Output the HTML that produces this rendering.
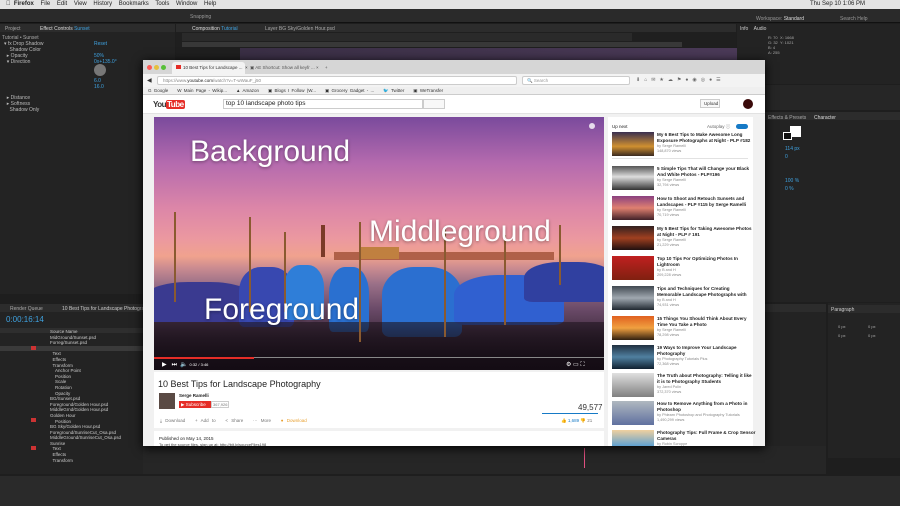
<!DOCTYPE html>
<html><head><meta charset="utf-8"><style>
*{margin:0;padding:0;box-sizing:border-box}
body{width:900px;height:506px;overflow:hidden;background:#1e1e1e;font-family:"Liberation Sans",sans-serif;position:relative;font-size:5px;color:#aaa}
.a{position:absolute}
.t{position:absolute;white-space:nowrap}
.blue{color:#3fa2e0}
.boat{position:absolute;background:#2f55c8;border-radius:40% 40% 10% 10%}
.pole{position:absolute;width:2px;background:#8a5a30}
</style></head><body>
<div class="a" style="left:0;top:0;width:900px;height:9px;background:#e3e3e3"></div>
<div class="t" style="left:6px;top:1px;font-size:6px;color:#222">&#63743;&nbsp;&nbsp;<b>Firefox</b>&nbsp;&nbsp;&nbsp; File&nbsp;&nbsp;&nbsp; Edit&nbsp;&nbsp;&nbsp; View&nbsp;&nbsp;&nbsp; History&nbsp;&nbsp;&nbsp; Bookmarks&nbsp;&nbsp;&nbsp; Tools&nbsp;&nbsp;&nbsp; Window&nbsp;&nbsp;&nbsp; Help</div>
<div class="t" style="left:810px;top:1px;font-size:6px;color:#222">Thu Sep 10 1:06 PM</div>
<div class="a" style="left:0;top:9px;width:900px;height:14px;background:#2a2a2a;border-bottom:1px solid #111"></div>
<div class="t" style="left:190px;top:14px;color:#999">Snapping</div>
<div class="t" style="left:756px;top:16px;color:#999">Workspace: <span style="color:#ddd">Standard</span></div>
<div class="t" style="left:840px;top:16px;color:#999">Search Help</div>
<div class="a" style="left:0;top:24px;width:175px;height:270px;background:#232323"></div>
<div class="a" style="left:0;top:24px;width:175px;height:8px;background:#2c2c2c"></div>
<div class="t" style="left:5px;top:26px">Project</div>
<div class="t" style="left:40px;top:26px;color:#ddd">Effect Controls <span class="blue">Sunset</span></div>
<div class="t" style="left:2px;top:35px">Tutorial • Sunset</div>
<div class="t" style="left:4px;top:41px;line-height:6px;color:#bbb">▾ fx Drop Shadow<br>&nbsp;&nbsp;&nbsp;&nbsp;Shadow Color<br>&nbsp;&nbsp;▸ Opacity<br>&nbsp;&nbsp;▾ Direction<br><br><br><br><br><br>&nbsp;&nbsp;▸ Distance<br>&nbsp;&nbsp;▸ Softness<br>&nbsp;&nbsp;&nbsp;&nbsp;Shadow Only</div>
<div class="t blue" style="left:94px;top:41px;line-height:6px">Reset<br><br>50%<br>0x+135.0°</div>
<div class="t blue" style="left:94px;top:78px;line-height:6px">6.0<br>16.0</div>
<div class="a" style="left:94px;top:64px;width:12px;height:12px;border-radius:50%;background:#777"></div>
<div class="a" style="left:176px;top:24px;width:560px;height:270px;background:#1f1f1f"></div>
<div class="a" style="left:176px;top:24px;width:560px;height:8px;background:#2c2c2c"></div>
<div class="t" style="left:192px;top:26px;color:#ddd">Composition <span class="blue">Tutorial</span></div>
<div class="t" style="left:265px;top:26px">Layer BG Sky/Golden Hour.psd</div>
<div class="a" style="left:182px;top:33px;width:450px;height:8px;background:#2a2a2a"></div>
<div class="a" style="left:182px;top:42px;width:500px;height:5px;background:#383838"></div>
<div class="a" style="left:240px;top:48px;width:500px;height:20px;background:linear-gradient(90deg,#3a2f45,#4b3a58)"></div>
<div class="a" style="left:737px;top:24px;width:163px;height:60px;background:#232323"></div>
<div class="t" style="left:740px;top:26px;color:#ccc">Info&nbsp;&nbsp;&nbsp; Audio</div>
<div class="t" style="left:768px;top:35px;line-height:5px;font-size:4px">R: 70<br>G: 32<br>B: 4<br>A: 255</div>
<div class="t" style="left:780px;top:35px;line-height:5px;font-size:4px">X: 1668<br>Y: 1021</div>
<div class="a" style="left:737px;top:85px;width:163px;height:25px;background:#262626"></div>
<div class="a" style="left:737px;top:112px;width:163px;height:190px;background:#232323"></div>
<div class="a" style="left:737px;top:112px;width:163px;height:8px;background:#2c2c2c"></div>
<div class="t" style="left:768px;top:115px">Effects &amp; Presets</div>
<div class="t" style="left:814px;top:115px;color:#ddd">Character</div>
<div class="a" style="left:790px;top:126px;width:11px;height:11px;background:#fff"></div>
<div class="a" style="left:783px;top:132px;width:9px;height:8px;background:#111;border:1px solid #fff"></div>
<div class="t blue" style="left:785px;top:145px;line-height:8px">114 px<br>0<br><br><br>100 %<br>0 %</div>
<div class="a" style="left:828px;top:303px;width:72px;height:155px;background:#232323"></div>
<div class="a" style="left:828px;top:305px;width:72px;height:8px;background:#2c2c2c"></div>
<div class="t" style="left:831px;top:307px;color:#ccc">Paragraph</div>
<div class="t" style="left:838px;top:322px;line-height:9px;font-size:4px">0 px<br>0 px</div>
<div class="t" style="left:868px;top:322px;line-height:9px;font-size:4px">0 px<br>0 px</div>
<div class="a" style="left:0;top:304px;width:826px;height:170px;background:#232323"></div>
<div class="a" style="left:0;top:304px;width:826px;height:8px;background:#2c2c2c"></div>
<div class="t" style="left:10px;top:306px">Render Queue</div>
<div class="t" style="left:62px;top:306px;color:#ccc">10 Best Tips for Landscape Photography</div>
<div class="t blue" style="left:6px;top:315px;font-size:8px">0:00:16:14</div>
<div class="a" style="left:0;top:328px;width:143px;height:5px;background:#2e2e2e"></div>
<div class="t" style="left:50px;top:329px;line-height:5.6px;color:#ccc;font-size:4.5px">Source Name<br>MidGround/Sunset.psd<br>Forreg/Sunset.psd<br>Sunset<br>&nbsp;&nbsp;Text<br>&nbsp;&nbsp;Effects<br>&nbsp;&nbsp;Transform<br>&nbsp;&nbsp;&nbsp;&nbsp;Anchor Point<br>&nbsp;&nbsp;&nbsp;&nbsp;Position<br>&nbsp;&nbsp;&nbsp;&nbsp;Scale<br>&nbsp;&nbsp;&nbsp;&nbsp;Rotation<br>&nbsp;&nbsp;&nbsp;&nbsp;Opacity<br>BG/Sunset.psd<br>Foreground/Golden Hour.psd<br>MiddleGrnd/Golden Hour.psd<br>Golden Hour<br>&nbsp;&nbsp;&nbsp;&nbsp;Position<br>BG Sky/Golden Hour.psd<br>Foreground/SunriseCut_Osa.psd<br>MiddleGround/SunriseCut_Osa.psd<br>Sunrise<br>&nbsp;&nbsp;Text<br>&nbsp;&nbsp;Effects<br>&nbsp;&nbsp;Transform</div>
<div class="a" style="left:0;top:346px;width:143px;height:5px;background:#3a3a3a"></div>
<div class="a" style="left:31px;top:346px;width:5px;height:4px;background:#c33"></div>
<div class="a" style="left:31px;top:418px;width:5px;height:4px;background:#c33"></div>
<div class="a" style="left:31px;top:446px;width:5px;height:4px;background:#c33"></div>
<div class="a" style="left:143px;top:446px;width:683px;height:28px;background:#262626"></div>
<div class="a" style="left:584px;top:448px;width:1px;height:20px;background:#e05080"></div>
<div class="a" style="left:0;top:476px;width:900px;height:30px;background:#2a2a2a"></div>
<!-- browser -->
<div class="a" style="left:143px;top:60px;width:622px;height:386px;background:#f1f1f1;box-shadow:0 2px 10px #000"></div>
<div class="a" style="left:143px;top:60px;width:622px;height:14px;background:#d6d6d6"></div>
<div class="a" style="left:147px;top:65px;width:5px;height:5px;border-radius:50%;background:#fc5b57"></div>
<div class="a" style="left:154px;top:65px;width:5px;height:5px;border-radius:50%;background:#e5bf3c"></div>
<div class="a" style="left:161px;top:65px;width:5px;height:5px;border-radius:50%;background:#57c038"></div>
<div class="a" style="left:172px;top:62px;width:73px;height:12px;background:#f3f3f3;border-radius:3px 3px 0 0"></div>
<div class="a" style="left:176px;top:65px;width:5px;height:4px;background:#e52d27"></div>
<div class="t" style="left:183px;top:65px;color:#333;font-size:4.5px">10 Best Tips for Landscape ...&nbsp; ×</div>
<div class="t" style="left:250px;top:65px;color:#555;font-size:4.5px">▣ AE Shortcut: Show all keyfr ... ×&nbsp;&nbsp;&nbsp;&nbsp; +</div>
<div class="a" style="left:143px;top:74px;width:622px;height:13px;background:#f3f3f3"></div>
<div class="a" style="left:157px;top:76px;width:360px;height:9px;background:#fff;border:1px solid #ccc;border-radius:2px"></div>
<div class="t" style="left:147px;top:77px;color:#333;font-size:6px">◀</div>
<div class="t" style="left:163px;top:78px;color:#888;font-size:4.5px">https://www.<span style="color:#222">youtube.com</span>/watch?v=T-wWauF_j50</div>
<div class="a" style="left:522px;top:76px;width:108px;height:9px;background:#fff;border:1px solid #ccc;border-radius:2px"></div>
<div class="t" style="left:527px;top:78px;color:#999;font-size:4.5px">🔍 Search</div>
<div class="t" style="left:636px;top:77px;color:#666;font-size:5px;letter-spacing:4px">⬇⌂✉★☁⚑●◉◎●☰</div>
<div class="a" style="left:143px;top:87px;width:622px;height:8px;background:#efefef;border-bottom:1px solid #ccc"></div>
<div class="t" style="left:148px;top:88px;color:#333;font-size:4.5px;word-spacing:1px">G Google&nbsp;&nbsp;&nbsp; W Main Page - Wikip...&nbsp;&nbsp;&nbsp; ▲ Amazon&nbsp;&nbsp;&nbsp; ▣ Blogs I Follow (W...&nbsp;&nbsp;&nbsp; ▣ Grocery Gadget - ...&nbsp;&nbsp;&nbsp; <span style="color:#3a9be0">🐦</span> Twitter&nbsp;&nbsp;&nbsp; ▣ WeTransfer</div>
<div class="a" style="left:143px;top:95px;width:622px;height:19px;background:#fff;border-bottom:1px solid #e2e2e2"></div>
<div class="t" style="left:153px;top:100px;font-size:8px;font-weight:bold;color:#333;letter-spacing:-0.5px">You<span style="background:#e52d27;color:#fff;border-radius:2px;padding:0 1px">Tube</span></div>
<div class="a" style="left:223px;top:99px;width:200px;height:10px;background:#fff;border:1px solid #ccc"></div>
<div class="t" style="left:226px;top:100px;font-size:6.5px;color:#222">top 10 landscape photo tips</div>
<div class="a" style="left:423px;top:99px;width:22px;height:10px;background:#f8f8f8;border:1px solid #ccc"></div>
<div class="a" style="left:700px;top:99px;width:20px;height:9px;background:#f8f8f8;border:1px solid #ccc"></div>
<div class="t" style="left:704px;top:101px;font-size:4.5px;color:#333">Upload</div>
<div class="a" style="left:743px;top:99px;width:10px;height:10px;border-radius:50%;background:#3a0a0a"></div>
<!-- video -->
<div class="a" style="left:154px;top:117px;width:450px;height:253px;overflow:hidden;background:linear-gradient(180deg,#7a4a9c 0%,#b46aae 18%,#dc86a8 36%,#eb98a0 48%,#f0a28e 55%,#c88a90 60%,#9a7088 66%,#6a4a68 76%,#3a2838 88%,#1a1018 100%)">
 <div class="a" style="left:180px;top:135px;width:220px;height:8px;background:#b06048"></div>
 <div class="a" style="left:205px;top:130px;width:40px;height:12px;background:#c08040"></div>
 <div class="a" style="left:167px;top:108px;width:4px;height:32px;background:#7a3a28"></div>
 <div class="boat" style="left:-10px;top:165px;width:110px;height:40px;background:#3a3a90"></div>
 <div class="boat" style="left:85px;top:150px;width:55px;height:60px;background:#3848b0"></div>
 <div class="boat" style="left:130px;top:148px;width:40px;height:55px;background:#2f7ed8"></div>
 <div class="boat" style="left:175px;top:150px;width:40px;height:65px;background:#2a70d0"></div>
 <div class="boat" style="left:228px;top:150px;width:80px;height:70px;background:#2b6fd0"></div>
 <div class="boat" style="left:300px;top:158px;width:110px;height:50px;background:#3060d0"></div>
 <div class="boat" style="left:370px;top:145px;width:90px;height:40px;background:#3040a0"></div>
 <div class="a" style="left:0;top:205px;width:450px;height:48px;background:linear-gradient(180deg,rgba(30,20,30,.6),#140c14)"></div>
 <div class="pole" style="left:20px;top:95px;height:90px"></div>
 <div class="pole" style="left:95px;top:100px;height:95px"></div>
 <div class="pole" style="left:130px;top:115px;height:80px"></div>
 <div class="pole" style="left:205px;top:105px;height:120px"></div>
 <div class="pole" style="left:290px;top:110px;height:110px"></div>
 <div class="pole" style="left:350px;top:118px;height:90px"></div>
 <div class="pole" style="left:405px;top:108px;height:60px"></div>
 <div class="t" style="left:36px;top:18px;font-size:30px;color:#fff;text-shadow:0 1px 3px rgba(0,0,0,.4)">Background</div>
 <div class="t" style="left:215px;top:98px;font-size:30px;color:#fff;text-shadow:0 1px 3px rgba(0,0,0,.4)">Middleground</div>
 <div class="t" style="left:50px;top:176px;font-size:30px;color:#fff;text-shadow:0 1px 3px rgba(0,0,0,.4)">Foreground</div>
 <div class="a" style="left:0;top:240px;width:450px;height:1px;background:#888"></div>
 <div class="a" style="left:0;top:240px;width:100px;height:2px;background:#e52d27"></div>
 <div class="t" style="left:8px;top:244px;color:#fff;font-size:6px">▶&nbsp;&nbsp; ⏭&nbsp; 🔈 <span style="font-size:4px">0:32 / 3:46</span></div>
 <div class="t" style="left:412px;top:244px;color:#fff;font-size:6px">⚙ ▭ ⛶</div>
 <div class="a" style="left:435px;top:6px;width:6px;height:6px;border-radius:50%;background:#fff;opacity:.8"></div>
</div>
<div class="a" style="left:154px;top:372px;width:450px;height:56px;background:#fff"></div>
<div class="t" style="left:158px;top:379px;font-size:9px;color:#222">10 Best Tips for Landscape Photography</div>
<div class="a" style="left:159px;top:393px;width:16px;height:16px;background:#5a4a44"></div>
<div class="t" style="left:179px;top:393px;font-size:4.5px;color:#222;font-weight:bold">Serge Ramelli</div>
<div class="a" style="left:179px;top:401px;width:32px;height:7px;background:#e52d27"></div>
<div class="t" style="left:181px;top:402px;font-size:4.5px;color:#fff">▶ Subscribe</div>
<div class="a" style="left:211px;top:401px;width:18px;height:7px;border:1px solid #ccc;background:#fff"></div>
<div class="t" style="left:213px;top:402px;font-size:4px;color:#777">367,926</div>
<div class="t" style="left:578px;top:403px;font-size:8px;color:#333">49,577</div>
<div class="a" style="left:542px;top:413px;width:56px;height:1px;background:#167ac6"></div>
<div class="t" style="left:160px;top:418px;font-size:4.5px;color:#777;word-spacing:2px">⤓ Download&nbsp;&nbsp; + Add to&nbsp;&nbsp; &lt; Share&nbsp;&nbsp; ··· More&nbsp;&nbsp; <span style="color:#e8a030">● Download</span></div>
<div class="t" style="left:561px;top:418px;font-size:4.5px;color:#167ac6">👍 1,689 <span style="color:#777">👎 21</span></div>
<div class="a" style="left:154px;top:431px;width:450px;height:15px;background:#fff"></div>
<div class="t" style="left:159px;top:436px;font-size:4.5px;color:#222">Published on May 14, 2015</div>
<div class="t" style="left:159px;top:442px;font-size:4px;color:#444">To get the source files, sign up at: http://bit.ly/sourceFiles198</div>
<div class="a" style="left:608px;top:117px;width:145px;height:329px;background:#fff"></div>
<div class="t" style="left:612px;top:124px;font-size:4.5px;color:#222">Up next</div>
<div class="t" style="left:707px;top:124px;font-size:4.5px;color:#666">Autoplay ⓘ</div>
<div class="a" style="left:736px;top:124px;width:12px;height:5px;border-radius:3px;background:#167ac6"></div>
<div class="a" style="left:612px;top:158px;width:136px;height:1px;background:#e2e2e2"></div>
<div id="side"></div>
<script>
var items=[
["My 6 Best Tips to Make Awesome Long","Exposure Photographs at Night - PLP #182","by Serge Ramelli","148,870 views","linear-gradient(#3a3050,#d09030 60%,#3a2a20)",132],
["5 Simple Tips That will Change your Black","And White Photos - PLP#196","by Serge Ramelli","32,794 views","linear-gradient(#555,#ddd 45%,#333)",166],
["How to Shoot and Retouch Sunsets and","Landscapes - PLP #115 by Serge Ramelli","by Serge Ramelli","70,719 views","linear-gradient(#8a4080,#e08070 50%,#402028)",196],
["My 5 Best Tips for Taking Awesome Photos","at Night - PLP # 191","by Serge Ramelli","21,229 views","linear-gradient(#302020,#a04020 50%,#201010)",226],
["Top 10 Tips For Optimizing Photos In","Lightroom","by B and H","209,228 views","linear-gradient(#c02020,#802010)",256],
["Tips and Techniques for Creating","Memorable Landscape Photographs with","by B and H","74,931 views","linear-gradient(#404850,#a0a8b0 50%,#202830)",286],
["15 Things You Should Think About Every","Time You Take a Photo","by Serge Ramelli","78,298 views","linear-gradient(#e06020,#f0a040 50%,#302010)",316],
["19 Ways to Improve Your Landscape","Photography","by Photography Tutorials Plus","72,368 views","linear-gradient(#203040,#5080a0 50%,#102030)",345],
["The Truth about Photography: Telling it like","it is to Photography Students","by Jared Polin","372,370 views","linear-gradient(#e0e0e0,#808080)",373],
["How to Remove Anything from a Photo in","Photoshop","by Phlearn Photoshop and Photography Tutorials","1,490,299 views","linear-gradient(#b0b8c0,#6070a0)",401],
["Photography Tips: Full Frame & Crop Sensor","Cameras","by Robin Scroppe","","linear-gradient(#f0d0a0,#60a0d0)",430]];
var h="";items.forEach(function(it){var y=it[5];
h+='<div class="a" style="left:612px;top:'+y+'px;width:42px;height:'+(y==430?16:24)+'px;background:'+it[4]+'"></div>';
h+='<div class="t" style="left:657px;top:'+y+'px;font-size:4.6px;line-height:5.5px;color:#222;font-weight:bold">'+it[0]+'<br>'+it[1]+'</div>';
h+='<div class="t" style="left:657px;top:'+(y+12)+'px;font-size:3.8px;line-height:5px;color:#888">'+it[2]+'<br>'+it[3]+'</div>';});
document.getElementById('side').outerHTML=h;
</script>
</body></html>
